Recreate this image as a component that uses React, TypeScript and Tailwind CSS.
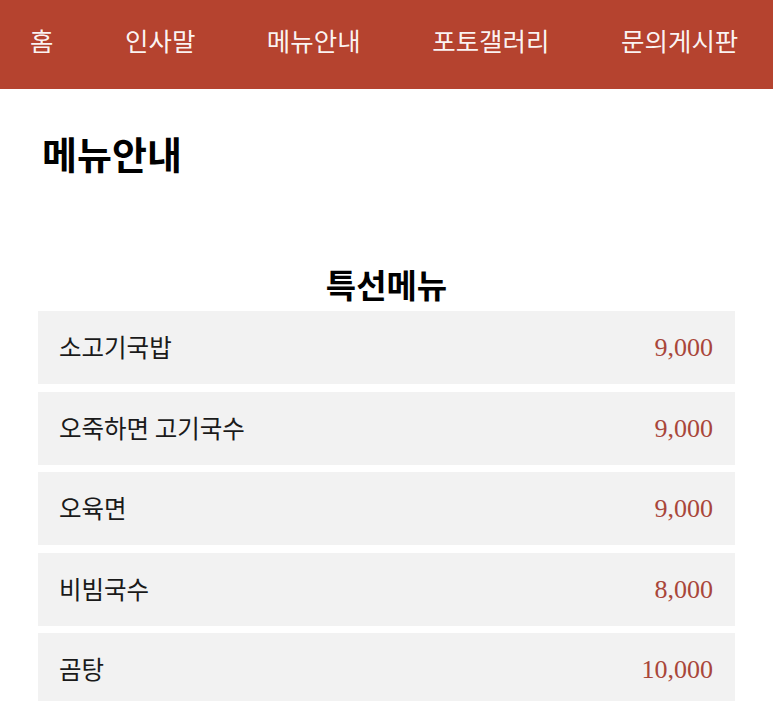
const navItems = ["홈", "인사말", "메뉴안내", "포토갤러리", "문의게시판"];

const specials = [
  { name: "소고기국밥", price: "9,000" },
  { name: "오죽하면 고기국수", price: "9,000" },
  { name: "오육면", price: "9,000" },
  { name: "비빔국수", price: "8,000" },
  { name: "곰탕", price: "10,000" },
];

const sans = "font-['Noto_Sans_CJK_KR','Noto_Sans',sans-serif]";

export default function App() {
  return (
    <div className={`min-h-screen bg-white ${sans}`}>
      <header className="h-[89px] bg-[#b5432f] flex items-center pl-[30px] pb-[10px]">
        <nav className="flex items-center gap-[71.5px]">
          {navItems.map((item) => (
            <a
              key={item}
              href="#"
              className="text-[25.5px] leading-none text-white/95 font-normal"
            >
              {item}
            </a>
          ))}
        </nav>
      </header>

      <main className="px-[38px]">
        <h1 className="mt-[41px] pl-[4px] text-[38px] leading-[46px] font-bold text-black">
          메뉴안내
        </h1>

        <section className="mt-[88px]">
          <h2 className="text-center text-[33px] leading-[40px] font-bold text-black mb-[7px]">
            특선메뉴
          </h2>
          <ul className="flex flex-col gap-[7.5px]">
            {specials.map((m) => (
              <li
                key={m.name}
                className="h-[73px] bg-[#f2f2f2] flex items-center justify-between pl-[21px] pr-[22px]"
              >
                <span className="text-[24.5px] text-[#1a1a1a]">{m.name}</span>
                <span className="text-[26px] text-[#a9463a] font-['Liberation_Serif',serif]">
                  {m.price}
                </span>
              </li>
            ))}
          </ul>
        </section>
      </main>
    </div>
  );
}
